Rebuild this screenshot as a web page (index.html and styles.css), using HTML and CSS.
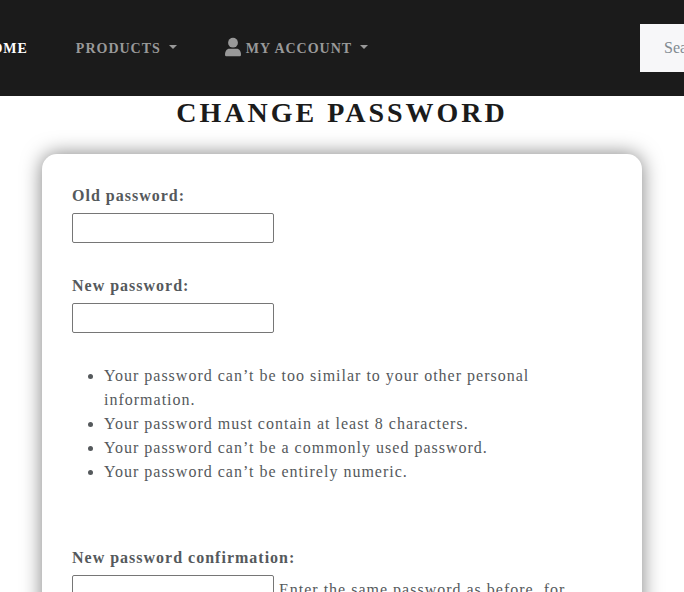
FILE: index.html
```html
<!DOCTYPE html>
<html lang="en">
<head>
<meta charset="utf-8">
<title>Change Password</title>
<link rel="stylesheet" href="styles.css">
</head>
<body>
<header class="navbar">
  <nav class="nav">
    <a class="nav-link active">Home</a>
    <a class="nav-link caret">Products</a>
    <a class="nav-link caret account"><svg class="user" viewBox="0 0 16 18"><circle cx="8" cy="4.700" r="4.900"/><path d="M4.500 10.800h7C14.500 10.800 16 13.500 16 16.800Q16 18.300 14.800 18.300H1.200Q0 18.300 0 16.800C0 13.500 1.500 10.800 4.500 10.800z"/></svg>My Account</a>
  </nav>
  <input class="search" type="text" placeholder="Search">
</header>
<main>
  <h1 class="title">Change Password</h1>
  <form class="card">
    <div class="field"><label>Old password:</label><input class="input" type="password"></div>
    <div class="field"><label>New password:</label><input class="input" type="password"></div>
    <ul class="rules">
      <li>Your password can’t be too similar to your other personal information.</li>
      <li>Your password must contain at least 8 characters.</li>
      <li>Your password can’t be a commonly used password.</li>
      <li>Your password can’t be entirely numeric.</li>
    </ul>
    <div class="field"><label>New password confirmation:</label><input class="input confirm" type="password"> Enter the same password as before, for verification.</div>
  </form>
</main>
</body>
</html>
```
FILE: styles.css
```css
* { box-sizing: border-box; }
html { overflow: hidden; }
body {
  margin: 0;
  height: 592px;
  overflow: hidden;
  background: #fff;
  color: #55595c;
  font: 16px/24px "Liberation Serif", serif;
  letter-spacing: 1px;
}
.navbar {
  display: flex;
  justify-content: space-between;
  height: 96px;
  padding: 24px 0;
  background: #1b1b1b;
}
.nav { display: flex; gap: 48px; margin-left: -20.500px; padding-top: 1px; align-items: center; }
.nav-link {
  display: flex;
  align-items: center;
  color: #999;
  font-size: 14px;
  font-weight: 700;
  text-transform: uppercase;
  white-space: nowrap;
}
.active { color: #fff; }
.caret::after {
  content: "";
  margin: -3px 0 0 8px;
  border: 4px solid transparent;
  border-top-color: currentColor;
  border-bottom: 0;
}
.user { width: 16px; height: 18px; margin: -4px 5px 0 0; overflow: visible; fill: currentColor; }
.search {
  flex: none;
  width: 200px;
  height: 48px;
  margin-right: -156px;
  padding: 0 24px;
  border: 0;
  background: #f7f7f9;
  font: 16px "Liberation Serif", serif;
}
.search::placeholder { color: #818a91; }
.title {
  margin: 0;
  color: #1b1b1b;
  font-size: 28px;
  line-height: 34px;
  letter-spacing: 3px;
  text-align: center;
  text-transform: uppercase;
}
.card {
  width: 600px;
  height: 600px;
  margin: 24px 0 0 42px;
  padding: 30px;
  border-radius: 15px;
  background: #fff;
  box-shadow: 0 0 20px rgba(0, 0, 0, .5);
}
.field { margin-bottom: 31px; }
label { display: block; margin-bottom: 5px; font-weight: 700; }
.input { width: 202px; height: 30px; border: 1px solid #767676; border-radius: 2px; font: 16px "Liberation Serif", serif; vertical-align: middle; }
.confirm { vertical-align: baseline; }
.rules { margin: 0 0 62px; padding-left: 32px; }
```
